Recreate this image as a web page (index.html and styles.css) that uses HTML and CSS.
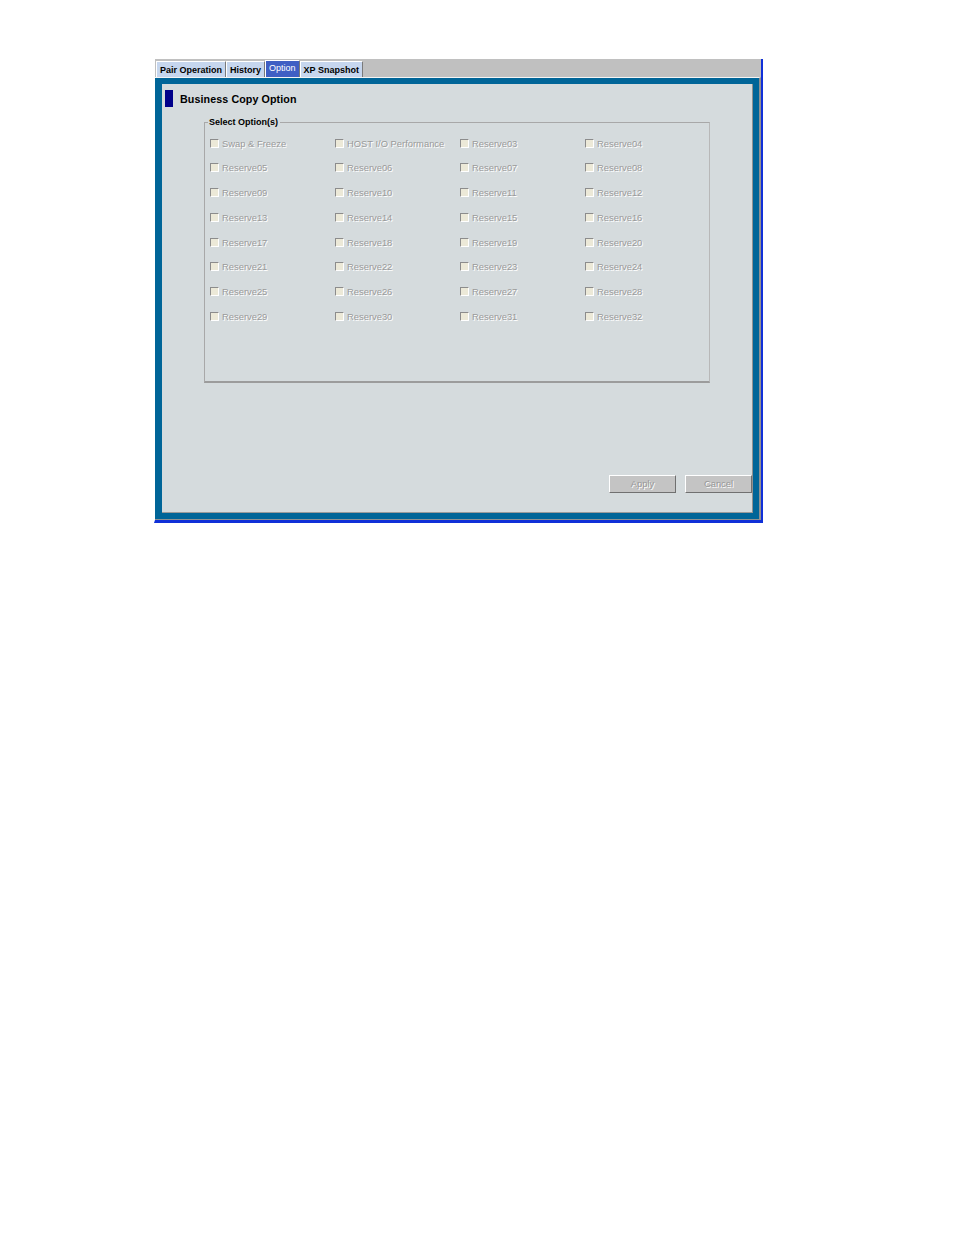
FILE: index.html
```html
<!DOCTYPE html>
<html>
<head>
<meta charset="utf-8">
<link rel="stylesheet" href="styles.css">
</head>
<body>
<div class="frame">
  <div class="tabbar">
    <div class="tab">Pair Operation</div>
    <div class="tab">History</div>
    <div class="tab active">Option</div>
    <div class="tab">XP Snapshot</div>
  </div>
  <div class="panel">
    <div class="band">
      <div class="inner">
        <div class="heading"><span class="marker"></span><span class="title">Business Copy Option</span></div>
        <div class="group">
          <div class="legend">Select Option(s)</div>
          <div class="grid">
            <label class="opt"><span class="box"></span>Swap &amp; Freeze</label>
            <label class="opt"><span class="box"></span>HOST I/O Performance</label>
            <label class="opt"><span class="box"></span>Reserve03</label>
            <label class="opt"><span class="box"></span>Reserve04</label>
            <label class="opt"><span class="box"></span>Reserve05</label>
            <label class="opt"><span class="box"></span>Reserve06</label>
            <label class="opt"><span class="box"></span>Reserve07</label>
            <label class="opt"><span class="box"></span>Reserve08</label>
            <label class="opt"><span class="box"></span>Reserve09</label>
            <label class="opt"><span class="box"></span>Reserve10</label>
            <label class="opt"><span class="box"></span>Reserve11</label>
            <label class="opt"><span class="box"></span>Reserve12</label>
            <label class="opt"><span class="box"></span>Reserve13</label>
            <label class="opt"><span class="box"></span>Reserve14</label>
            <label class="opt"><span class="box"></span>Reserve15</label>
            <label class="opt"><span class="box"></span>Reserve16</label>
            <label class="opt"><span class="box"></span>Reserve17</label>
            <label class="opt"><span class="box"></span>Reserve18</label>
            <label class="opt"><span class="box"></span>Reserve19</label>
            <label class="opt"><span class="box"></span>Reserve20</label>
            <label class="opt"><span class="box"></span>Reserve21</label>
            <label class="opt"><span class="box"></span>Reserve22</label>
            <label class="opt"><span class="box"></span>Reserve23</label>
            <label class="opt"><span class="box"></span>Reserve24</label>
            <label class="opt"><span class="box"></span>Reserve25</label>
            <label class="opt"><span class="box"></span>Reserve26</label>
            <label class="opt"><span class="box"></span>Reserve27</label>
            <label class="opt"><span class="box"></span>Reserve28</label>
            <label class="opt"><span class="box"></span>Reserve29</label>
            <label class="opt"><span class="box"></span>Reserve30</label>
            <label class="opt"><span class="box"></span>Reserve31</label>
            <label class="opt"><span class="box"></span>Reserve32</label>
          </div>
        </div>
        <div class="buttons">
          <div class="btn">Apply</div>
          <div class="btn">Cancel</div>
        </div>
      </div>
    </div>
  </div>
</div>
</body>
</html>
```

FILE: styles.css
```css
html, body {
  margin: 0;
  padding: 0;
  background: #ffffff;
}

body {
  font-family: "Liberation Sans", Arial, sans-serif;
}

.frame {
  margin: 59px 0 0 154px;
  width: 609px;
  height: 464px;
  box-sizing: border-box;
  background: #c0c0c0;
  border-right: 2px solid #1030d8;
  border-bottom: 3px solid #1030d8;
  border-left: 1px solid #ffffff;
  display: flex;
  flex-direction: column;
}

.tabbar {
  height: 18px;
  display: flex;
  align-items: flex-end;
  padding-left: 1px;
  box-sizing: border-box;
}

.tab {
  height: 16px;
  box-sizing: border-box;
  padding: 1px 3px 0 3px;
  background: #c6d6ee;
  border-top: 1px solid #ffffff;
  border-left: 1px solid #ffffff;
  border-right: 1px solid #7a7a7a;
  font-size: 9px;
  font-weight: bold;
  line-height: 14px;
  color: #000000;
  white-space: nowrap;
}

.tab.active {
  height: 17px;
  padding-top: 0;
  background: #3f5fc4;
  color: #ffffff;
  font-weight: normal;
  line-height: 15px;
}

.panel {
  flex: 1;
  border-top: 1px solid #f4f4f4;
  border-right: 2px solid #909090;
  border-bottom: 1px solid #909090;
  display: flex;
}

.band {
  flex: 1;
  border: 6px solid #006598;
  border-left-width: 7px;
  display: flex;
}

.inner {
  flex: 1;
  background: #d5dbdd;
  border-right: 1px solid #909090;
  border-bottom: 1px solid #9a9a9a;
  display: flex;
  flex-direction: column;
}

.heading {
  display: flex;
  align-items: center;
  gap: 7px;
  margin: 6px 0 0 3px;
}

.marker {
  width: 8px;
  height: 17px;
  background: #00008a;
}

.title {
  font-size: 10.7px;
  font-weight: bold;
  color: #000000;
  letter-spacing: 0.1px;
}

.group {
  margin: 15px 0 0 42px;
  width: 506px;
  height: 261px;
  box-sizing: border-box;
  border: 1px solid #a8a8a8;
  border-right-color: #b8b8b8;
  border-bottom: 2px solid #9c9c9c;
  position: relative;
}

.legend {
  position: absolute;
  top: -6px;
  left: 3px;
  padding: 0 2px 0 1px;
  background: #d5dbdd;
  font-size: 9px;
  font-weight: bold;
  line-height: 11px;
  color: #000000;
}

.grid {
  display: grid;
  grid-template-columns: repeat(4, 125px);
  grid-auto-rows: 24.75px;
  padding: 14px 0 0 5px;
}

.opt {
  display: flex;
  align-items: center;
  height: 12px;
  font-size: 9.4px;
  color: #9a9a9a;
  text-shadow: 1px 1px 0 #ffffff;
  white-space: nowrap;
}

.box {
  width: 7px;
  height: 7px;
  margin-right: 3px;
  background: #ece9d8;
  border-top: 1px solid #8c8c8c;
  border-left: 1px solid #8c8c8c;
  border-right: 1px solid #ffffff;
  border-bottom: 1px solid #ffffff;
}

.buttons {
  margin-top: auto;
  margin-bottom: 19px;
  display: flex;
  justify-content: flex-end;
  gap: 9px;
}

.btn {
  width: 67px;
  height: 18px;
  box-sizing: border-box;
  background: #c4c4c4;
  border-top: 1px solid #ffffff;
  border-left: 1px solid #ffffff;
  border-right: 1px solid #707070;
  border-bottom: 1px solid #707070;
  font-size: 9.4px;
  line-height: 16px;
  text-align: center;
  color: #989898;
  text-shadow: 1px 1px 0 #ffffff;
}
```
